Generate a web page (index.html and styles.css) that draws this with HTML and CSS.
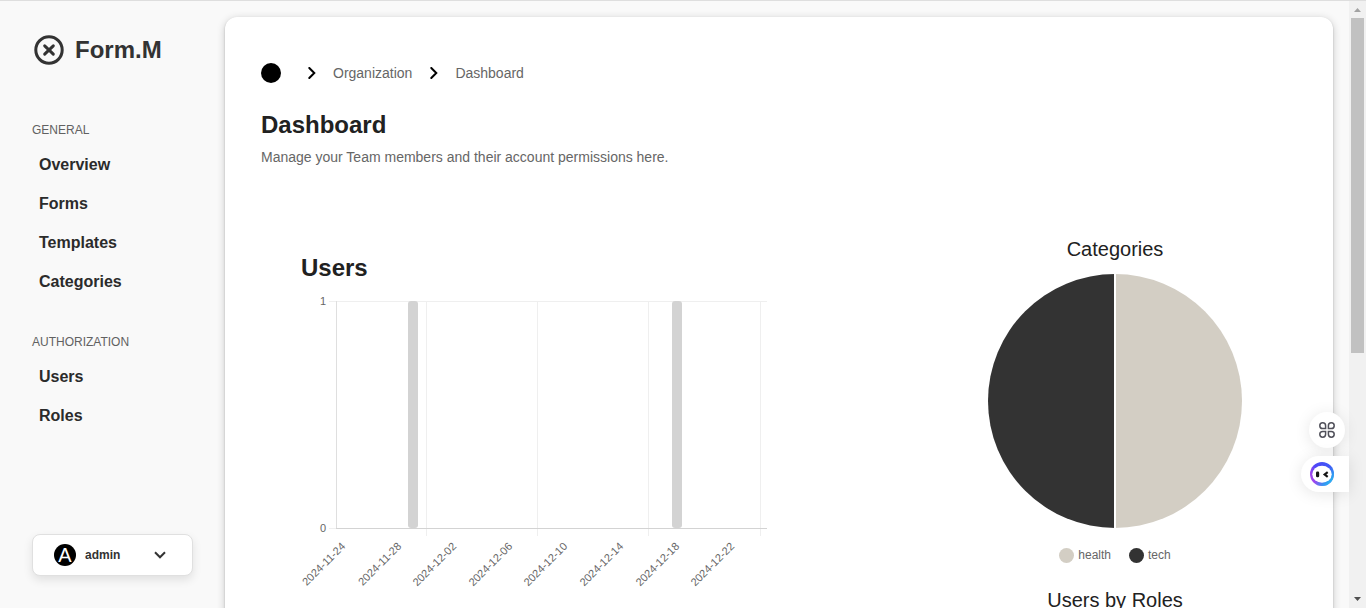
FILE: index.html
```html
<!DOCTYPE html>
<html lang="en">
<head>
<meta charset="utf-8">
<title>Form.M – Dashboard</title>
<meta name="viewport" content="width=device-width, initial-scale=1">
<link rel="stylesheet" href="styles.css">
</head>
<body>
<div class="window">
  <aside class="sidebar">
    <a class="brand" href="#">
      <svg class="brand-icon" viewBox="0 0 30 30" aria-hidden="true"><circle cx="15" cy="15" r="13.2"/><path d="M10.7 10.9l8.6 8.2M19.3 10.9l-8.6 8.2"/></svg>
      <span>Form.M</span>
    </a>
    <nav class="nav">
      <section class="nav-group">
        <h2 class="nav-title">GENERAL</h2>
        <a class="nav-link" href="#">Overview</a>
        <a class="nav-link" href="#">Forms</a>
        <a class="nav-link" href="#">Templates</a>
        <a class="nav-link" href="#">Categories</a>
      </section>
      <section class="nav-group">
        <h2 class="nav-title">AUTHORIZATION</h2>
        <a class="nav-link" href="#">Users</a>
        <a class="nav-link" href="#">Roles</a>
      </section>
    </nav>
    <button class="account" type="button">
      <span class="avatar">A</span>
      <span class="account-name">admin</span>
      <svg class="account-chevron" viewBox="0 0 12 8" aria-hidden="true"><path d="M1 1.3l5 5 5-5"/></svg>
    </button>
  </aside>

  <main class="panel">
    <nav class="crumbs" aria-label="Breadcrumb">
      <a class="crumb-home" href="#" aria-label="Home"></a>
      <svg class="crumb-sep" viewBox="0 0 8 12" aria-hidden="true"><path d="M1.3 1l5 5-5 5"/></svg>
      <a class="crumb" href="#">Organization</a>
      <svg class="crumb-sep" viewBox="0 0 8 12" aria-hidden="true"><path d="M1.3 1l5 5-5 5"/></svg>
      <a class="crumb" href="#">Dashboard</a>
    </nav>
    <h1 class="title">Dashboard</h1>
    <p class="subtitle">Manage your Team members and their account permissions here.</p>

    <div class="charts">
      <section class="users">
        <h2 class="users-title">Users</h2>
        <svg class="bar-chart" width="468" height="300" viewBox="0 0 468 300" role="img" aria-label="Users per day">
          <g class="grid">
            <path d="M28 11.5H466M125.500 11V246M236.500 11V246M347.500 11V246M459.500 11V246M28 238.500H35"/>
          </g>
          <path class="axis-y" d="M35.500 11V238"/>
          <g class="bars">
            <rect x="107" y="11" width="10" height="227" rx="3"/>
            <rect x="371" y="11" width="10" height="227" rx="3"/>
          </g>
          <path class="axis-x" d="M35 238.500H466"/>
          <g class="ticks">
            <text x="25" y="15">1</text>
            <text x="25" y="242">0</text>
            <text transform="translate(45 257) rotate(-45)">2024-11-24</text>
            <text transform="translate(101 257) rotate(-45)">2024-11-28</text>
            <text transform="translate(156 257) rotate(-45)">2024-12-02</text>
            <text transform="translate(212 257) rotate(-45)">2024-12-06</text>
            <text transform="translate(267 257) rotate(-45)">2024-12-10</text>
            <text transform="translate(323 257) rotate(-45)">2024-12-14</text>
            <text transform="translate(379 257) rotate(-45)">2024-12-18</text>
            <text transform="translate(434 257) rotate(-45)">2024-12-22</text>
          </g>
        </svg>
      </section>
      <div class="pies">
        <section class="pie">
          <h2 class="pie-title">Categories</h2>
          <svg class="pie-chart" viewBox="0 0 254 254" role="img" aria-label="health 50%, tech 50%">
            <path class="dark" d="M127 0A127 127 0 0 0 127 254Z"/>
            <path class="sand" d="M127 0A127 127 0 0 1 127 254Z"/>
            <path class="split" d="M127 0V254"/>
          </svg>
          <ul class="legend">
            <li><i class="dot dot-sand"></i>health</li>
            <li><i class="dot dot-dark"></i>tech</li>
          </ul>
        </section>
        <section class="pie">
          <h2 class="pie-title">Users by Roles</h2>
        </section>
      </div>
    </div>
  </main>

  <div class="scrollbar" aria-hidden="true">
    <svg class="arrow arrow-up" viewBox="0 0 7 4"><path d="M3.500 0L7 4H0z"/></svg>
    <div class="track"><div class="thumb"></div></div>
    <svg class="arrow arrow-down" viewBox="0 0 7 4"><path d="M0 0H7L3.500 4z"/></svg>
  </div>

  <div class="floating">
    <button class="float-apps" type="button" aria-label="Apps">
      <svg viewBox="0 0 16 16" aria-hidden="true">
        <path d="M6.600 6.600H3.700A2.900 2.900 0 1 1 6.600 3.700ZM9.400 6.600V3.700A2.900 2.900 0 1 1 12.300 6.600ZM6.600 9.400V12.300A2.900 2.900 0 1 1 3.700 9.400ZM9.400 9.400H12.300A2.900 2.900 0 1 1 9.400 12.300Z"/>
      </svg>
    </button>
    <button class="float-bot" type="button" aria-label="Assistant">
      <svg viewBox="0 0 24 24" aria-hidden="true">
        <defs><linearGradient id="ring" x1="0" y1="1" x2="1" y2="0.500"><stop offset="0" stop-color="#b04af0"/><stop offset=".25" stop-color="#9a45ee"/><stop offset=".5" stop-color="#4f46f8"/><stop offset="1" stop-color="#4058f5"/></linearGradient>
        <linearGradient id="cyan" x1=".5" y1=".5" x2=".9" y2=".9"><stop offset="0" stop-color="#25c4ee" stop-opacity="0"/><stop offset="1" stop-color="#25c4ee"/></linearGradient></defs>
        <circle cx="12" cy="12" r="12" fill="url(#ring)"/>
        <circle cx="12" cy="12" r="12" fill="url(#cyan)"/>
        <ellipse cx="12" cy="12.300" rx="9.700" ry="8.500" fill="#fff"/>
        <rect x="6" y="9.500" width="3.200" height="5.800" rx="1.400" fill="#151515"/>
        <path d="M17.700 10.200L14.700 12.500L17.700 14.800" fill="none" stroke="#151515" stroke-width="2.200"/>
      </svg>
    </button>
  </div>
</div>
</body>
</html>
```
FILE: styles.css
```css
* {
  box-sizing: border-box;
}

body {
  margin: 0;
  overflow: hidden;
  background: #f9f9f9;
  color: #212121;
  font-family: "Liberation Sans", Arial, sans-serif;
}

h1, h2, p, ul {
  margin: 0;
  padding: 0;
}

a {
  color: inherit;
  text-decoration: none;
}

button {
  border: 0;
  font: inherit;
  cursor: pointer;
}

.window {
  display: flex;
  height: 100vh;
  overflow: hidden;
  position: relative;
  border-top: 1px solid #dedede;
}

/* Sidebar */
.sidebar {
  flex: none;
  display: flex;
  flex-direction: column;
  width: 225px;
  padding: 32px;
}

.brand {
  display: flex;
  align-items: center;
  gap: 11px;
  height: 34px;
  padding-left: 2px;
  color: #333;
  font-size: 24px;
  font-weight: 700;
}

.brand-icon {
  width: 30px;
  height: 30px;
  fill: none;
  stroke: #333;
  stroke-width: 3;
  stroke-linecap: round;
}

.nav {
  display: flex;
  flex-direction: column;
  gap: 32px;
  margin-top: 54px;
}

.nav-group {
  display: flex;
  flex-direction: column;
}

.nav-title {
  margin-bottom: 6px;
  color: #616161;
  font-size: 12px;
  font-weight: 400;
  line-height: 18px;
}

.nav-link {
  padding-left: 7px;
  color: #2b2b2b;
  font-size: 16px;
  font-weight: 700;
  line-height: 39px;
}

.account {
  display: flex;
  align-items: center;
  width: 100%;
  height: 42px;
  margin-top: auto;
  padding: 0 26px 0 21px;
  border: 1px solid #e0e0e0;
  border-radius: 8px;
  background: #fff;
  box-shadow: 0 4px 10px rgba(0, 0, 0, 0.1);
  color: #333;
  font-size: 12px;
  font-weight: 700;
}

.avatar {
  width: 22px;
  height: 22px;
  margin-right: 9px;
  border-radius: 50%;
  background: #000;
  color: #fff;
  font-size: 20px;
  font-weight: 400;
  line-height: 22px;
  text-align: center;
}

.account-chevron {
  width: 12px;
  height: 8px;
  margin-left: auto;
  fill: none;
  stroke: #333;
  stroke-width: 2;
}

/* Main panel */
.panel {
  flex: 1;
  min-width: 0;
  align-self: flex-start;
  min-height: 100vh;
  margin: 16px 16px 0 0;
  padding: 44px 36px;
  border-radius: 12px 12px 0 0;
  background: #fff;
  box-shadow: 0 2px 8px rgba(0, 0, 0, 0.2), 0 1px 2px rgba(0, 0, 0, 0.2);
}

.crumbs {
  display: flex;
  align-items: center;
  height: 24px;
  color: #666;
  font-size: 14px;
}

.crumb-home {
  width: 20px;
  height: 20px;
  margin-right: 10px;
  border-radius: 50%;
  background: #000;
}

.crumb-sep {
  width: 8px;
  height: 12px;
  margin: 0 17px;
  fill: none;
  stroke: #000;
  stroke-width: 2;
  stroke-linecap: round;
}

.crumb + .crumb-sep {
  margin-left: 18px;
}

.title {
  margin-top: 24px;
  font-size: 24px;
  line-height: 32px;
}

.subtitle {
  margin-top: 6px;
  color: #666;
  font-size: 14px;
  line-height: 20px;
}

.charts {
  display: grid;
  grid-template-columns: 1fr 364px;
  margin-top: 66px;
}

.users {
  padding: 19px 0 0 40px;
}

.users-title {
  font-size: 24px;
  line-height: 32px;
}

.bar-chart {
  display: block;
  margin-top: 6px;
}

.grid {
  fill: none;
  stroke: #efefef;
}

.axis-y {
  stroke: #dfdfdf;
}

.axis-x {
  stroke: #d3d3d3;
}

.bars {
  fill: #d3d3d3;
}

.ticks {
  fill: #666;
  font-size: 11px;
  text-anchor: end;
}

.pies {
  display: flex;
  flex-direction: column;
  gap: 22px;
  padding-top: 2px;
}

.pie {
  display: flex;
  flex-direction: column;
  align-items: center;
}

.pie-title {
  margin-bottom: 11px;
  font-size: 20px;
  font-weight: 400;
  line-height: 28px;
}

.pie-chart {
  width: 254px;
  height: 254px;
}

.dark {
  fill: #333;
}

.sand {
  fill: #d3cec4;
}

.split {
  stroke: #fff;
  stroke-width: 2;
}

.legend {
  display: flex;
  gap: 18px;
  margin-top: 18px;
  color: #666;
  font-size: 12px;
  line-height: 18px;
  list-style: none;
}

.legend li {
  display: flex;
  align-items: center;
  gap: 4px;
}

.dot {
  width: 15px;
  height: 15px;
  border-radius: 50%;
}

.dot-sand {
  background: #d3cec4;
}

.dot-dark {
  background: #333;
}

/* Scrollbar */
.scrollbar {
  flex: none;
  display: flex;
  flex-direction: column;
  align-items: center;
  width: 17px;
  background: #f1f1f1;
}

.track {
  flex: 1;
  width: 13px;
}

.thumb {
  height: 58.4%;
  background: #c1c1c1;
}

.arrow {
  width: 7px;
  height: 4px;
}

.arrow-up {
  margin: 7px 0 6px;
  fill: #a3a3a3;
}

.arrow-down {
  margin: 6px 0 7px;
  fill: #505050;
}

/* Buttons floating over the panel edge */
.floating {
  position: absolute;
  right: 17px;
  bottom: 116px;
  display: flex;
  flex-direction: column;
  align-items: flex-end;
  gap: 8px;
}

.float-apps,
.float-bot {
  display: flex;
  align-items: center;
  height: 36px;
  background: #fff;
  box-shadow: 0 2px 16px rgba(0, 0, 0, 0.1);
}

.float-apps {
  justify-content: center;
  width: 36px;
  margin-right: 4px;
  padding: 0;
  border-radius: 50%;
}

.float-apps svg {
  width: 16px;
  height: 16px;
  fill: none;
  stroke: #50505a;
  stroke-width: 1.5;
}

.float-bot {
  width: 48px;
  padding: 0 0 0 9px;
  border-radius: 18px 0 0 18px;
}

.float-bot svg {
  width: 24px;
  height: 24px;
}
```
